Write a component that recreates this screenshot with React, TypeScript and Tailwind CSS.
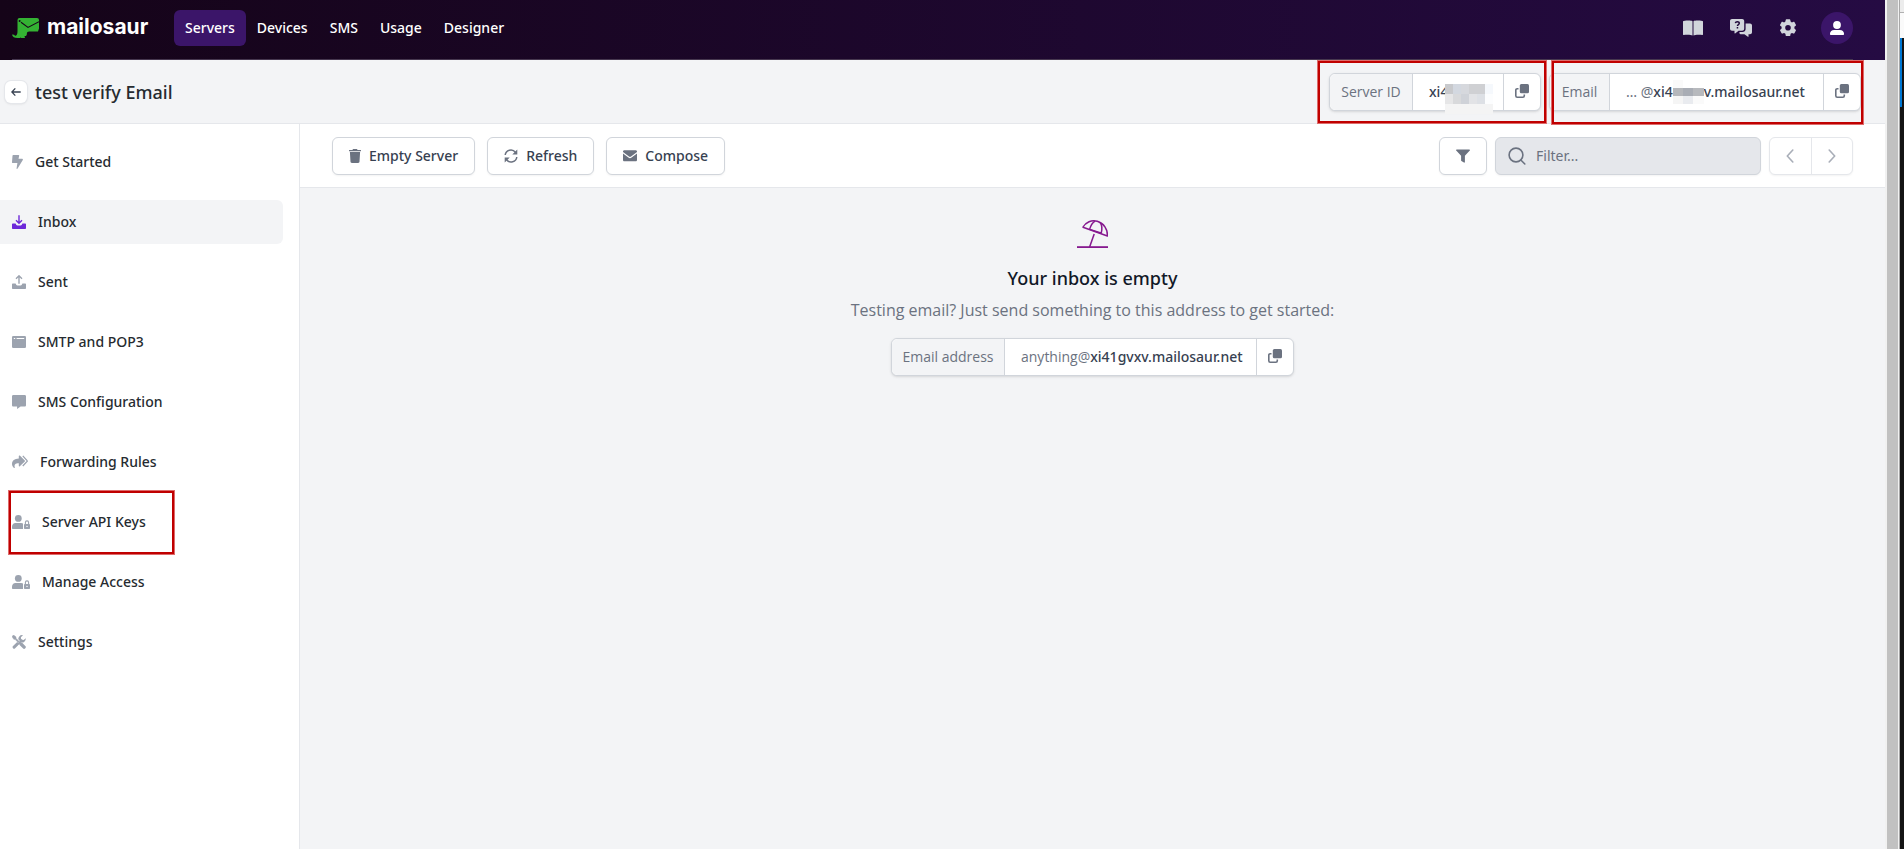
import type { ReactNode } from "react";

type IconProps = { className?: string };

function LogoMark() {
  return (
    <svg viewBox="0 0 27 20" className="h-5 w-[27px]" aria-hidden="true">
      <path
        fill="#34b233"
        d="M7.5 0H25a2 2 0 0 1 2 2v8.500l-1 3H17.200c-1.500 0-2.300.8-2.300 2.100 0 1.200-.3 1.900-1 2.500h-1.400l.5 1.900H9.300l-.6-.6-.8.600H5.500C2.500 20 .3 18.600 0 16.400l2.100.3c.5.9 1.300 1.200 2.100.7 1-.7 1.300-2.200 1.300-4.400V2a2 2 0 0 1 2-2Z"
      />
      <path d="M9 4.200 16 9.400l11-5.700" fill="none" stroke="#160519" strokeWidth="1.100" />
      <circle cx="7.600" cy="2.900" r="1" fill="#160519" />
    </svg>
  );
}

const BoltIcon = ({ className }: IconProps) => (
  <svg viewBox="0 0 11 14" className={className} fill="currentColor" aria-hidden="true">
    <path d="M1.200 0h5.300c.5 0 .8.400.7.800L6.500 3.800h3.700c.6 0 .9.600.6 1.100L5.600 13.600c-.3.600-1.100.4-1-.3L5.400 8H.800C.3 8-.1 7.600 0 7.100L.5.700C.5.300.8 0 1.200 0Z" />
  </svg>
);

const TrayBase = () => (
  <path d="M1 8.600h2.600l.6 1.100c.3.500.7.800 1.300.8h3c.6 0 1-.3 1.300-.8l.6-1.100H13c.6 0 1 .4 1 1V13c0 .6-.4 1-1 1H1c-.6 0-1-.4-1-1V9.600c0-.6.400-1 1-1Z" />
);

const InboxIcon = ({ className }: IconProps) => (
  <svg viewBox="0 0 14 14" className={className} fill="currentColor" aria-hidden="true">
    <TrayBase />
    <path d="M7 .2v8M4 5.300l3 3 3-3" fill="none" stroke="currentColor" strokeWidth="1.400" />
  </svg>
);

const SentIcon = ({ className }: IconProps) => (
  <svg viewBox="0 0 14 14" className={className} fill="currentColor" aria-hidden="true">
    <TrayBase />
    <path d="M7 8.800v-8M4 3.800l3-3 3 3" fill="none" stroke="currentColor" strokeWidth="1.400" />
  </svg>
);

const WindowIcon = ({ className }: IconProps) => (
  <svg viewBox="0 0 14 14" className={className} aria-hidden="true">
    <rect y="1" width="14" height="12" rx="1.300" fill="currentColor" />
    <path d="M1.800 3.500h1.400M4.600 3.500h7.600" stroke="#fff" strokeWidth="1" />
  </svg>
);

const MessageIcon = ({ className }: IconProps) => (
  <svg viewBox="0 0 14 14" className={className} fill="currentColor" aria-hidden="true">
    <path d="M1.300 0h11.400c.7 0 1.300.6 1.300 1.300v8.900c0 .7-.6 1.300-1.300 1.300H8.600l-3.500 2.500v-2.500H1.300C.6 11.500 0 10.900 0 10.200V1.300C0 .6.600 0 1.300 0Z" />
  </svg>
);

const ForwardIcon = ({ className }: IconProps) => (
  <svg viewBox="0 0 16 14" className={className} aria-hidden="true">
    <path
      fill="currentColor"
      d="M6.800 1v2.500C2.600 3.700 0 5.500 0 9c0 1.700.9 3.100 2.100 3.900.4.300.8 0 .7-.5C2 9.500 3.400 8.400 6.800 8.300v2.500c0 .6.600.9 1 .5l5-4.800c.3-.3.3-.7 0-1L7.800.6c-.4-.4-1-.1-1 .4Z"
    />
    <path d="m10.800.9 4.300 4.700c.3.300.3.500 0 .8l-4.300 4.600" fill="none" stroke="currentColor" strokeWidth="1.300" />
  </svg>
);

const UserLockIcon = ({ className }: IconProps) => (
  <svg viewBox="0 0 18 14" className={className} aria-hidden="true">
    <g fill="currentColor">
      <circle cx="6.300" cy="3.400" r="3.400" />
      <path d="M3.500 8h5.600c.8 0 1.400.2 1.900.5v5.500H.7c-.4 0-.7-.3-.7-.7v-1.600C0 9.600 1.500 8 3.500 8Z" />
      <rect x="12" y="8.900" width="6" height="5.100" rx=".8" />
    </g>
    <path d="M13.400 9V7.500a1.600 1.600 0 0 1 3.200 0V9" fill="none" stroke="currentColor" strokeWidth="1.100" />
    <circle cx="15" cy="11.400" r=".7" fill="#fff" />
  </svg>
);

const ToolsIcon = ({ className }: IconProps) => (
  <svg viewBox="0 0 14 14" className={className} aria-hidden="true">
    <path d="m2.100 12.100 6.700-6.600" stroke="currentColor" strokeWidth="3" strokeLinecap="round" />
    <path d="M13.800 3.300a3.800 3.800 0 0 1-5.100 4L6.600 5.300A3.800 3.800 0 0 1 11 .2L8.900 2.300l.3 2.300 2.400.4Z" fill="currentColor" />
    <path d="m1.300 1.300 5.900 5.900" stroke="#fff" strokeWidth="2.600" />
    <path d="M1.500 0 4 1.900v1.400l3.200 3.200-1 1-3.200-3.200H1.800L0 1.500Z" fill="currentColor" stroke="currentColor" strokeWidth=".5" />
    <path d="m7.900 9.100 3.300 3.300" stroke="#fff" strokeWidth="4.500" />
    <path d="m9 9 3.100 3.100" stroke="currentColor" strokeWidth="3.400" strokeLinecap="round" />
    <path d="m6.600 6.600 2 2" stroke="currentColor" strokeWidth="1.400" />
  </svg>
);

const TrashIcon = ({ className }: IconProps) => (
  <svg viewBox="0 0 12 14" className={className} fill="currentColor" aria-hidden="true">
    <path d="M.4.900h3.100L3.800.300C3.900.1 4.100 0 4.300 0h3.400c.2 0 .4.100.5.300l.3.600h3.100c.2 0 .4.200.4.400V2.200H0v-.9C0 1.100.2.900.4.900ZM.9 3h10.200l-.6 9.800c0 .7-.6 1.200-1.300 1.200H2.800c-.7 0-1.300-.5-1.300-1.200Z" />
  </svg>
);

const SyncIcon = ({ className }: IconProps) => (
  <svg viewBox="0 0 14 14" className={className} aria-hidden="true">
    <path d="M1.200 6A5.700 5.700 0 0 1 11.400 3.200M12.800 8A5.700 5.700 0 0 1 2.600 10.800" fill="none" stroke="currentColor" strokeWidth="1.500" />
    <path d="M13.300.5v5H8.300ZM.7 13.500v-5h5Z" fill="currentColor" />
  </svg>
);

const MailIcon = ({ className }: IconProps) => (
  <svg viewBox="0 0 14 12" className={className} fill="currentColor" aria-hidden="true">
    <path d="M1.300.3h11.400c.7 0 1.300.6 1.300 1.300v.5L8 6.500c-.6.500-1.400.5-2 0L0 2.100v-.5C0 .9.600.3 1.300.3Z" />
    <path d="m0 3.600 5.400 4c1 .7 2.200.7 3.200 0l5.400-4v6.300c0 .7-.6 1.300-1.300 1.300H1.300C.6 11.200 0 10.600 0 9.900Z" />
  </svg>
);

const FunnelIcon = ({ className }: IconProps) => (
  <svg viewBox="0 0 14 14" className={className} fill="currentColor" aria-hidden="true">
    <path d="M.7.500h12.600c.6 0 .9.700.5 1.100L8.900 6.700v6.400c0 .5-.6.800-1 .5L5.400 12c-.2-.1-.3-.3-.3-.5V6.700L.2 1.600C-.2 1.200.1.500.7.500Z" />
  </svg>
);

const SearchIcon = ({ className }: IconProps) => (
  <svg viewBox="0 0 18 18" className={className} fill="none" stroke="currentColor" strokeWidth="1.600" aria-hidden="true">
    <circle cx="8" cy="8" r="6.900" />
    <path d="m12.800 13 4 4" strokeLinecap="round" />
  </svg>
);

const CopyIcon = ({ className }: IconProps) => (
  <svg viewBox="0 0 14 14" className={className} aria-hidden="true">
    <path
      d="M3.500 4.700H2.200c-.8 0-1.400.6-1.400 1.400v5.700c0 .8.600 1.400 1.400 1.400h5.700c.8 0 1.400-.6 1.400-1.400v-1.200"
      fill="none"
      stroke="currentColor"
      strokeWidth="1.600"
    />
    <rect x="4.800" width="9.200" height="9.200" rx="1.500" fill="currentColor" />
  </svg>
);

const BookIcon = ({ className }: IconProps) => (
  <svg viewBox="0 0 20 16" className={className} fill="currentColor" aria-hidden="true">
    <path d="M9.500 1.200v14.300C8 14.700 5 14.600.5 14.900c-.3 0-.5-.2-.5-.5V1.500C0 1.200.2.900.5.900 5 .4 8 .4 9.500 1.200ZM10.500 1.200c1.500-.8 4.500-.8 9-.3.3 0 .5.300.5.600v12.900c0 .3-.2.500-.5.500-4.500-.3-7.500-.2-9 .6Z" />
  </svg>
);

const HelpIcon = ({ className }: IconProps) => (
  <svg viewBox="0 0 22 18" className={className} aria-hidden="true">
    <path
      fill="currentColor"
      d="M2 0h10.200c1.100 0 2 .9 2 2v7.800c0 1.100-.9 2-2 2H8.600l-3.500 2.600c-.3.200-.6 0-.6-.3v-2.300H2c-1.100 0-2-.9-2-2V2C0 .9.900 0 2 0Z"
    />
    <path
      fill="currentColor"
      d="M15.600 4.400H20c1.100 0 2 .9 2 2v6.800c0 1.100-.9 2-2 2h-1.500v2.300c0 .3-.3.500-.6.300l-3.500-2.600h-3.200c-1.100 0-1.900-.8-2-1.800l.8-.4h2.500c1.700 0 3.100-1.400 3.100-3.100Z"
    />
    <path
      d="M5.300 4.200c.2-1 .9-1.500 2-1.500s2 .6 2 1.600c0 1.300-1.900 1.400-1.900 2.800"
      fill="none"
      stroke="#210a3a"
      strokeWidth="1.400"
    />
    <rect x="6.700" y="8" width="1.500" height="1.500" fill="#210a3a" />
  </svg>
);

const GearIcon = ({ className }: IconProps) => (
  <svg viewBox="0 0 18 18" className={className} aria-hidden="true">
    <path
      fill="currentColor"
      fillRule="evenodd"
      d="M7.400.3h3.200c.4 0 .6.300.7.600l.3 1.700 1.300.8 1.600-.6c.3-.1.700 0 .9.300l1.500 2.700c.2.300.1.700-.2.900l-1.300 1.100v1.800l1.300 1.100c.3.200.4.600.2.900l-1.500 2.700c-.2.300-.6.400-.9.300l-1.600-.6-1.300.8-.3 1.700c-.1.300-.3.600-.7.600H7.400c-.4 0-.6-.3-.7-.6l-.3-1.700-1.300-.8-1.600.6c-.3.100-.7 0-.9-.3l-1.500-2.700c-.2-.3-.1-.7.2-.9l1.300-1.100V7.800L1.300 6.700c-.3-.2-.4-.6-.2-.9l1.500-2.700c.2-.3.6-.4.900-.3l1.600.6 1.300-.8.300-1.700c.1-.3.300-.6.700-.6ZM9 6a2.800 2.800 0 1 0 0 5.600A2.800 2.800 0 0 0 9 6Z"
    />
  </svg>
);

const PersonIcon = ({ className }: IconProps) => (
  <svg viewBox="0 0 14 14" className={className} fill="currentColor" aria-hidden="true">
    <circle cx="7" cy="4" r="3.900" />
    <path d="M4 8.900h6c2.200 0 4 1.500 4 3.600v.8c0 .4-.3.700-.7.700H.7c-.4 0-.7-.3-.7-.7v-.8c0-2.100 1.800-3.600 4-3.600Z" />
  </svg>
);

const UmbrellaIcon = ({ className }: IconProps) => (
  <svg viewBox="0 0 31 28" className={className} fill="none" stroke="currentColor" strokeWidth="1.500" aria-hidden="true">
    <path d="M6 7.200C8.700 2.200 14.600-.3 20.300 1.300c6.600 1.900 10.400 8 10.100 14.700Z" strokeLinejoin="round" />
    <path d="M12.600 9.400c1-3.600 3.200-7 5.400-8.300M24.200 13.300c1-4 .9-8.200-1-10.800M12.800 9.400l11 3.600" />
    <path d="m17.200 14-4.600 13" />
    <path d="M0 27.100h31" strokeWidth="1.800" />
  </svg>
);

const ChevronIcon = ({ className }: IconProps) => (
  <svg viewBox="0 0 8 14" className={className} fill="none" stroke="currentColor" strokeWidth="1.600" aria-hidden="true">
    <path d="M6.800 1 1.300 7l5.500 6" strokeLinecap="round" strokeLinejoin="round" />
  </svg>
);

const ArrowIcon = ({ className }: IconProps) => (
  <svg viewBox="0 0 10 10" className={className} fill="none" stroke="currentColor" strokeWidth="1.300" aria-hidden="true">
    <path d="M9.700 5H.9M4.300 1.400.8 5l3.500 3.600" />
  </svg>
);

const navLinks = ["Servers", "Devices", "SMS", "Usage", "Designer"];

const sideLinks = [
  { label: "Get Started", icon: <BoltIcon className="h-3.5 w-[11px]" /> },
  { label: "Inbox", icon: <InboxIcon className="size-3.5" />, active: true },
  { label: "Sent", icon: <SentIcon className="size-3.5" /> },
  { label: "SMTP and POP3", icon: <WindowIcon className="size-3.5" /> },
  { label: "SMS Configuration", icon: <MessageIcon className="size-3.5" /> },
  { label: "Forwarding Rules", icon: <ForwardIcon className="h-3.5 w-4" /> },
  { label: "Server API Keys", icon: <UserLockIcon className="h-3.5 w-[18px]" />, marked: true },
  { label: "Manage Access", icon: <UserLockIcon className="h-3.5 w-[18px]" /> },
  { label: "Settings", icon: <ToolsIcon className="size-3.5" /> },
];

function Marker({ className }: IconProps) {
  return <span className={`pointer-events-none absolute border-2 border-[#c00000] outline outline-[#dd6b6b] ${className}`} />;
}

type FieldProps = { label: string; labelWidth: string; valueWidth: string; children: ReactNode };

function CopyField({ label, labelWidth, valueWidth, children }: FieldProps) {
  return (
    <div className="flex h-[38px] rounded-md border border-[#d1d5db] bg-white text-sm text-[#6b7280] shadow-sm">
      <span className={`flex items-center justify-center rounded-l-md border-r border-[#d1d5db] bg-[#f3f4f6] font-['Open_Sans',sans-serif] ${labelWidth}`}>
        {label}
      </span>
      <span className={`relative flex items-center px-4 whitespace-pre ${valueWidth}`}>{children}</span>
      <button
        type="button"
        aria-label={`Copy ${label}`}
        className="flex w-[37px] items-center justify-center border-l border-[#d1d5db]"
      >
        <CopyIcon className="mb-0.5 size-3.5" />
      </button>
    </div>
  );
}

function IdMosaic() {
  return (
    <span className="absolute top-2.5 left-8 grid w-12 grid-cols-6 grid-rows-3">
      <i className="h-2.5 bg-[#c8c9cc]" />
      <i className="h-2.5 bg-[#d3d8e0]" />
      <i className="h-2.5 bg-[#d6d8dd]" />
      <i className="h-2.5 bg-[#cfd0d3]" />
      <i className="h-2.5 bg-[#cfd0d3]" />
      <i className="h-2.5 bg-[#f5f8fc]" />
      <i className="h-2.5 bg-[#e6e6e7]" />
      <i className="h-2.5 bg-[#d8d9db]" />
      <i className="h-2.5 bg-[#cfd2d8]" />
      <i className="h-2.5 bg-[#e2e3e6]" />
      <i className="h-2.5 bg-[#dde0e5]" />
      <i className="h-2.5 bg-[#fcfdfe]" />
      <i className="col-span-6 h-2.5 bg-[#f4f4f4]" />
    </span>
  );
}

function EmailMosaic() {
  return (
    <span className="relative grid w-[31px] grid-cols-3">
      <i className="h-2 bg-[#fafafa]" />
      <i className="col-span-2 h-2" />
      <i className="h-2 bg-[#b5b7bb]" />
      <i className="h-2 bg-[#a9adb5]" />
      <i className="h-2 bg-[#b7b9bd]" />
      <i className="h-2 bg-[#f5f5f5]" />
      <i className="h-2 bg-[#e9ebef]" />
      <i className="h-2 bg-[#fafafa]" />
    </span>
  );
}

const toolButton =
  "flex h-[38px] items-center gap-2 rounded-md border border-[#d1d5db] bg-white px-4 text-sm font-medium text-[#374151] shadow-xs";

export default function App() {
  return (
    <div className="flex min-h-screen bg-[#f3f4f6] font-['Noto_Sans',sans-serif]">
      <div className="flex min-w-0 flex-1 flex-col">
        <header className="bg-linear-to-r from-[#150418] to-[#250b43]">
          <div className="mr-8 ml-3 flex h-15 items-center border-b border-[#46374f] pb-1">
            <a href="#home" className="flex items-center gap-2 text-white">
              <LogoMark />
              <span className="w-[102px] pb-0.5 font-['Inter',sans-serif] text-[21px] leading-6 font-bold">mailosaur</span>
            </a>
            <nav className="ml-[25px] flex">
              {navLinks.map((name, i) => (
                <a
                  key={name}
                  href={`#${name.toLowerCase()}`}
                  className={`flex h-9 items-center rounded-md px-[11px] text-sm font-medium text-white ${i === 0 ? "bg-[#3b1569]" : ""}`}
                >
                  {name}
                </a>
              ))}
            </nav>
            <div className="ml-auto flex items-center text-[#d1d5db]">
              <button type="button" aria-label="Documentation" className="mr-[27px]">
                <BookIcon className="h-4 w-5" />
              </button>
              <button type="button" aria-label="Help" className="mr-[27px]">
                <HelpIcon className="h-[18px] w-[22px]" />
              </button>
              <button type="button" aria-label="Account settings" className="mr-6">
                <GearIcon className="size-[18px]" />
              </button>
              <button type="button" aria-label="Profile" className="flex size-8 items-center justify-center rounded-full bg-[#3b1569] text-white">
                <PersonIcon className="size-3.5" />
              </button>
            </div>
          </div>
        </header>

        <div className="flex h-16 items-center border-b border-[#e5e7eb] pr-6 pl-[5px]">
          <a href="#servers" aria-label="Back to servers" className="flex size-[22px] items-center justify-center rounded-md bg-white text-[#374151] shadow-sm ring ring-[#e5e7eb]">
            <ArrowIcon className="size-2.5" />
          </a>
          <h1 className="ml-2 text-lg font-medium text-[#262b30]">test verify Email</h1>
          <div className="ml-auto flex gap-2">
            <div className="relative">
              <CopyField label="Server ID" labelWidth="w-[83px]" valueWidth="w-[90px]">
                <b className="font-medium text-[#374151]">xi4</b>
                <IdMosaic />
              </CopyField>
              <Marker className="-top-3 -right-[5px] -bottom-3 -left-[11px]" />
            </div>
            <div className="relative">
              <CopyField label="Email" labelWidth="w-[60px]" valueWidth="w-[213px]">
                <span>… @</span>
                <b className="font-medium text-[#374151]">xi4</b>
                <EmailMosaic />
                <b className="font-medium text-[#374151]">v.mailosaur.net</b>
              </CopyField>
              <Marker className="-top-3 -right-0.5 -bottom-[13px] left-[3px]" />
            </div>
          </div>
        </div>

        <div className="flex flex-1">
          <aside className="w-[300px] shrink-0 border-r border-[#e5e7eb] bg-white pt-4 pr-4">
            <nav className="flex flex-col gap-4">
              {sideLinks.map(({ label, icon, active, marked }) => (
                <a
                  key={label}
                  href={`#${label.toLowerCase().replaceAll(" ", "-")}`}
                  className={`relative flex h-11 items-center gap-3 rounded-r-md pl-3 text-sm font-medium text-[#262b30] ${active ? "bg-[#f3f4f6]" : ""}`}
                >
                  <span className={active ? "text-[#6d28d9]" : "text-[#9ca3af]"}>{icon}</span>
                  {label}
                  {marked && <Marker className="-top-[9px] -bottom-[10px] left-[9px] w-[165px]" />}
                </a>
              ))}
            </nav>
          </aside>

          <main className="flex min-w-0 flex-1 flex-col">
            <div className="flex h-16 items-center gap-3 border-b border-[#e5e7eb] bg-white px-8">
              <button type="button" className={toolButton}>
                <TrashIcon className="h-3.5 w-3 text-[#6b7280]" />
                Empty Server
              </button>
              <button type="button" className={toolButton}>
                <SyncIcon className="size-3.5 text-[#6b7280]" />
                Refresh
              </button>
              <button type="button" className={toolButton}>
                <MailIcon className="h-3 w-3.5 text-[#6b7280]" />
                Compose
              </button>
              <div className="ml-auto flex gap-2">
                <button type="button" aria-label="Filter options" className="flex h-[38px] w-12 items-center justify-center rounded-md border border-[#d1d5db] bg-white text-[#6b7280] shadow-xs">
                  <FunnelIcon className="size-3.5" />
                </button>
                <label className="flex h-[38px] w-[266px] items-center gap-2.5 rounded-md border border-[#d1d5db] bg-[#e5e7eb] px-3 text-[#6b7280] shadow-xs">
                  <SearchIcon className="size-[18px] shrink-0" />
                  <input type="text" aria-label="Filter messages" placeholder="Filter..." className="min-w-0 flex-1 bg-transparent text-sm outline-none placeholder:text-[#6b7280]" />
                </label>
                <div className="flex h-[38px] w-[84px] divide-x divide-[#e5e7eb] rounded-md border border-[#e5e7eb] bg-white text-[#a9aeb8] shadow-xs">
                  <button type="button" aria-label="Previous page" className="flex flex-1 items-center justify-center">
                    <ChevronIcon className="h-3.5 w-2" />
                  </button>
                  <button type="button" aria-label="Next page" className="flex flex-1 items-center justify-center">
                    <ChevronIcon className="h-3.5 w-2 rotate-180" />
                  </button>
                </div>
              </div>
            </div>

            <section className="flex flex-col items-center pt-8">
              <UmbrellaIcon className="h-7 w-[31px] text-[#86198f]" />
              <h2 className="mt-4 text-lg leading-7 font-medium text-[#111827]">Your inbox is empty</h2>
              <p className="mt-1.5 mb-4 font-['Open_Sans',sans-serif] text-base text-[#6b7280]">
                Testing email? Just send something to this address to get started:
              </p>
              <CopyField label="Email address" labelWidth="w-[113px]" valueWidth="w-[251px]">
                <span className="font-['Open_Sans',sans-serif]">anything@</span>
                <b className="font-medium text-[#374151]">xi41gvxv.mailosaur.net</b>
              </CopyField>
            </section>
          </main>
        </div>
      </div>

      <div className="flex w-[19px] shrink-0" aria-hidden="true">
        <div className="w-0.5 bg-[#f1f1f1]" />
        <div className="w-[11px] bg-[#c1c1c1]" />
        <div className="w-px bg-[#f1f1f1]" />
        <div className="w-px bg-[#a8a8a8]" />
        <div className="flex flex-1 flex-col bg-[#141414]">
          <div className="h-3 bg-[#ececec]" />
          <div className="h-px bg-[#b0b0b0]" />
          <div className="h-[25px] bg-[#fafafa]" />
          <div className="h-[69px] w-0.5 bg-[#0078d4]" />
        </div>
      </div>
    </div>
  );
}
